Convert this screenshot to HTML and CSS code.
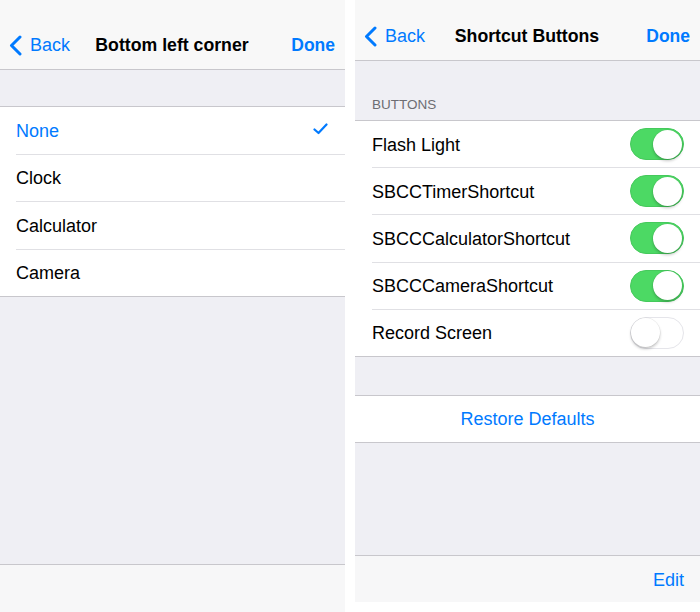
FILE: index.html
```html
<!DOCTYPE html>
<html lang="en">
<head>
<meta charset="utf-8">
<title>Settings screens</title>
<link rel="stylesheet" href="styles.css">
</head>
<body>
<div class="screens">
  <section class="screen screen-left">
    <header class="navbar navbar-tall">
      <a class="nav-back"><svg class="chevron" width="13" height="21" viewBox="0 0 13 21"><polyline points="11,2 2.5,10.5 11,19" fill="none" stroke="#007aff" stroke-width="3" stroke-linecap="round" stroke-linejoin="round"/></svg><span>Back</span></a>
      <h1 class="nav-title">Bottom left corner</h1>
      <a class="nav-done">Done</a>
    </header>
    <div class="gap gap-left"></div>
    <ul class="group group-left">
      <li class="row selected"><span>None</span><svg class="check" width="15" height="12" viewBox="0 0 15 12"><polyline points="1.5,6.5 5.5,10 13.5,1.5" fill="none" stroke="#007aff" stroke-width="2.2" stroke-linecap="round" stroke-linejoin="round"/></svg></li>
      <li class="row"><span>Clock</span></li>
      <li class="row"><span>Calculator</span></li>
      <li class="row"><span>Camera</span></li>
    </ul>
    <div class="fill"></div>
    <footer class="toolbar toolbar-left"></footer>
  </section>

  <section class="screen screen-right">
    <header class="navbar navbar-short">
      <a class="nav-back"><svg class="chevron" width="13" height="21" viewBox="0 0 13 21"><polyline points="11,2 2.5,10.5 11,19" fill="none" stroke="#007aff" stroke-width="3" stroke-linecap="round" stroke-linejoin="round"/></svg><span>Back</span></a>
      <h1 class="nav-title">Shortcut Buttons</h1>
      <a class="nav-done">Done</a>
    </header>
    <div class="section-header">BUTTONS</div>
    <ul class="group group-right">
      <li class="row"><span>Flash Light</span><span class="switch on"><span class="knob"></span></span></li>
      <li class="row"><span>SBCCTimerShortcut</span><span class="switch on"><span class="knob"></span></span></li>
      <li class="row"><span>SBCCCalculatorShortcut</span><span class="switch on"><span class="knob"></span></span></li>
      <li class="row"><span>SBCCCameraShortcut</span><span class="switch on"><span class="knob"></span></span></li>
      <li class="row"><span>Record Screen</span><span class="switch off"><span class="knob"></span></span></li>
    </ul>
    <div class="gap gap-right"></div>
    <div class="group action-group">
      <a class="action">Restore Defaults</a>
    </div>
    <div class="fill"></div>
    <footer class="toolbar toolbar-right"><a class="toolbar-btn">Edit</a></footer>
  </section>
</div>
</body>
</html>
```

FILE: styles.css
```css
* { box-sizing: border-box; }

html, body {
  margin: 0;
  padding: 0;
  background: #ffffff;
}

body {
  font-family: "Liberation Sans", Arial, "Helvetica Neue", sans-serif;
  color: #000;
  -webkit-font-smoothing: antialiased;
}

.screens {
  display: flex;
  align-items: flex-start;
  gap: 10px;
  width: 700px;
  height: 612px;
}

.screen {
  width: 345px;
  display: flex;
  flex-direction: column;
  background: #efeff4;
}

.screen-left { height: 612px; }
.screen-right { height: 602px; }

/* Navigation bar */
.navbar {
  display: grid;
  grid-template-columns: 1fr auto 1fr;
  align-items: center;
  background: #f8f8f8;
  border-bottom: 1px solid #c8c7cc;
  padding-left: 9px;
  padding-right: 10px;
  flex: none;
}

.navbar-tall { height: 70px; padding-top: 21px; }
.navbar-short { height: 61px; padding-top: 13px; }

.nav-back {
  display: flex;
  align-items: center;
  gap: 8px;
  color: #007aff;
  font-size: 18px;
  justify-self: start;
}

.chevron { display: block; }

.nav-title {
  margin: 0;
  font-size: 17.7px;
  font-weight: 700;
  color: #000;
  white-space: nowrap;
}

.nav-done {
  justify-self: end;
  color: #007aff;
  font-size: 17.5px;
  font-weight: 700;
}

/* Gray gaps */
.gap { flex: none; }
.gap-left { height: 36px; }
.gap-right { height: 38px; }

.section-header {
  flex: none;
  height: 59px;
  display: flex;
  align-items: flex-end;
  padding: 0 17px 7px;
  font-size: 13.5px;
  line-height: 16px;
  color: #6d6d72;
}

/* Groups */
.group {
  list-style: none;
  margin: 0;
  padding: 0;
  background: #ffffff;
  border-top: 1px solid #c8c7cc;
  border-bottom: 1px solid #c8c7cc;
  flex: none;
}

.row {
  display: flex;
  align-items: center;
  justify-content: space-between;
  border-bottom: 1px solid #e0e0e4;
  font-size: 18px;
}

.row > span:first-child { padding-top: 2px; }

.row:last-child { border-bottom: none; }

.group-left .row {
  margin-left: 16px;
  padding-right: 17px;
  height: 47.5px;
}
.group-left .row:last-child { height: 46.5px; }

.group-right .row {
  margin-left: 17px;
  padding-right: 16px;
  height: 47.2px;
}
.group-right .row:last-child { height: 46.2px; }

.row.selected { color: #007aff; }
.check { display: block; margin-top: -2px; }

/* Switches */
.switch {
  width: 54px;
  height: 32px;
  border-radius: 16px;
  display: flex;
  align-items: center;
  padding: 1px;
  flex: none;
}

.switch.on {
  background: #4cd964;
  border: 1px solid #46c95c;
  justify-content: flex-end;
}

.switch.off {
  background: #ffffff;
  border: 1.5px solid #e5e5ea;
  justify-content: flex-start;
  padding: 0;
}

.knob {
  width: 29px;
  height: 29px;
  border-radius: 50%;
  background: #ffffff;
  box-shadow: 0 2px 3px rgba(0, 0, 0, 0.22), 0 0 0 0.5px rgba(0, 0, 0, 0.08);
}

/* Action row */
.action-group {
  height: 48px;
  display: flex;
  align-items: center;
  justify-content: center;
}

.action {
  color: #007aff;
  font-size: 18px;
  padding-top: 1px;
}

.fill { flex: 1; }

/* Toolbar */
.toolbar {
  flex: none;
  background: #f7f7f8;
  border-top: 1px solid #c8c7cc;
  display: flex;
  align-items: center;
  justify-content: flex-end;
  padding-right: 16px;
}

.toolbar-left { height: 48px; }
.toolbar-right { height: 47px; }

.toolbar-btn {
  color: #007aff;
  font-size: 18px;
  padding-top: 2px;
}
```
